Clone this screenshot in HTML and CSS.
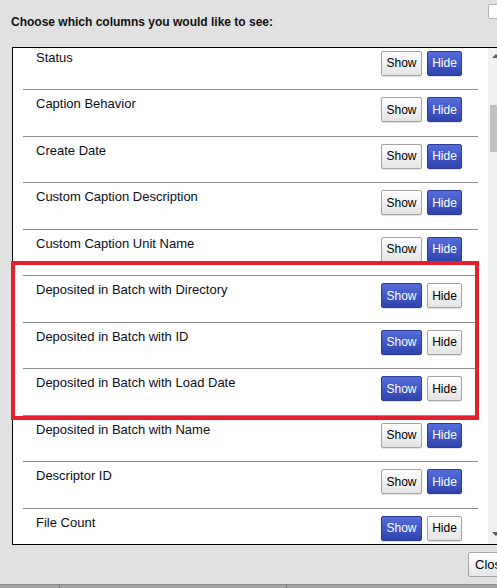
FILE: index.html
```html
<!DOCTYPE html>
<html>
<head>
<meta charset="utf-8">
<link rel="stylesheet" href="styles.css">
</head>
<body>
<div class="dialog">
  <div class="title">Choose which columns you would like to see:</div>
  <div class="corner-btn"></div>
  <div class="listbox">
    <div class="list">
      <div class="rows">
        <div class="row"><span class="label">Status</span><div class="btns"><button class="btn show">Show</button><button class="btn hide on">Hide</button></div></div>
        <div class="row"><span class="label">Caption Behavior</span><div class="btns"><button class="btn show">Show</button><button class="btn hide on">Hide</button></div></div>
        <div class="row"><span class="label">Create Date</span><div class="btns"><button class="btn show">Show</button><button class="btn hide on">Hide</button></div></div>
        <div class="row"><span class="label">Custom Caption Description</span><div class="btns"><button class="btn show">Show</button><button class="btn hide on">Hide</button></div></div>
        <div class="row"><span class="label">Custom Caption Unit Name</span><div class="btns"><button class="btn show">Show</button><button class="btn hide on">Hide</button></div></div>
        <div class="row"><span class="label">Deposited in Batch with Directory</span><div class="btns"><button class="btn show on">Show</button><button class="btn hide">Hide</button></div></div>
        <div class="row"><span class="label">Deposited in Batch with ID</span><div class="btns"><button class="btn show on">Show</button><button class="btn hide">Hide</button></div></div>
        <div class="row"><span class="label">Deposited in Batch with Load Date</span><div class="btns"><button class="btn show on">Show</button><button class="btn hide">Hide</button></div></div>
        <div class="row"><span class="label">Deposited in Batch with Name</span><div class="btns"><button class="btn show">Show</button><button class="btn hide on">Hide</button></div></div>
        <div class="row"><span class="label">Descriptor ID</span><div class="btns"><button class="btn show">Show</button><button class="btn hide on">Hide</button></div></div>
        <div class="row"><span class="label">File Count</span><div class="btns"><button class="btn show on">Show</button><button class="btn hide">Hide</button></div></div>
      </div>
    </div>
    <div class="scrollbar">
      <div class="arrow-up"></div>
      <div class="thumb"></div>
      <div class="arrow-down"></div>
    </div>
  </div>
  <div class="footer"><button class="close">Close</button></div>
</div>
<div class="bottom-bar">
  <div class="cell c1"></div>
  <div class="cell c2"></div>
  <div class="cell c3"></div>
</div>
<div class="highlight"></div>
</body>
</html>
```

FILE: styles.css
```css
html, body {
  margin: 0;
  padding: 0;
}
body {
  background: #e1e1e1;
  width: 497px;
  height: 588px;
  overflow: hidden;
  position: relative;
  font-family: "Liberation Sans", Arial, sans-serif;
  color: #000;
}
.dialog {
  display: flex;
  flex-direction: column;
}
.title {
  margin: 15px 0 0 11px;
  font-size: 12px;
  line-height: 15px;
  font-weight: bold;
  color: #111;
}
.corner-btn {
  position: absolute;
  left: 488px;
  top: 4px;
  width: 20px;
  height: 13px;
  background: #fff;
  border: 1px solid #b5b5b5;
  border-radius: 2px;
}
.listbox {
  margin: 17px 0 0 12px;
  width: 505px;
  height: 498px;
  box-sizing: border-box;
  border: 1px solid #000;
  background: #fff;
  display: flex;
  flex-shrink: 0;
}
.list {
  width: 475px;
  overflow: hidden;
  flex-shrink: 0;
}
.rows {
  margin-top: -4.5px;
}
.row {
  margin: 0 10px;
  height: 46.5px;
  box-sizing: border-box;
  border-bottom: 1px solid #8c8c8c;
  display: flex;
  align-items: flex-start;
}
.row:last-child {
  border-bottom: none;
}
.label {
  flex: 1;
  padding: 6px 0 0 13px;
  font-size: 13px;
  line-height: 15px;
  color: #0d0d1a;
}
.btns {
  display: flex;
  gap: 5px;
  margin: 7px 16px 0 0;
}
.btn {
  height: 25px;
  padding: 0;
  margin: 0;
  font-family: "Liberation Sans", Arial, sans-serif;
  font-size: 12px;
  color: #000;
  background: linear-gradient(#ffffff, #e4e4e4);
  border: 1px solid #a3a3a3;
  border-radius: 2px;
  box-shadow: 0 1px 1px rgba(0,0,0,0.12);
}
.btn.show { width: 41px; }
.btn.hide { width: 35px; }
.btn.on {
  color: #fff;
  background: linear-gradient(#536ddb, #2e44ad);
  border: 1px solid #2b3c98;
}
.scrollbar {
  width: 17px;
  background: #f0f0f0;
  position: relative;
  flex-shrink: 0;
}
.arrow-up {
  position: absolute;
  left: 4px;
  top: 6px;
  width: 0;
  height: 0;
  border-left: 4px solid transparent;
  border-right: 4px solid transparent;
  border-bottom: 4px solid #5a5a5a;
}
.arrow-down {
  position: absolute;
  left: 4px;
  bottom: 8px;
  width: 0;
  height: 0;
  border-left: 4px solid transparent;
  border-right: 4px solid transparent;
  border-top: 4px solid #5a5a5a;
}
.thumb {
  position: absolute;
  left: 2px;
  top: 57px;
  width: 13px;
  height: 47px;
  background: #c1c1c1;
}
.footer {
  display: flex;
  padding-left: 468px;
  margin-top: 7px;
}
.close {
  height: 25px;
  padding: 0 6px;
  margin: 0;
  flex-shrink: 0;
  font-family: "Liberation Sans", Arial, sans-serif;
  font-size: 13px;
  color: #000;
  background: linear-gradient(#ffffff, #e6e6e6);
  border: 1px solid #a3a3a3;
  border-radius: 2px;
}
.bottom-bar {
  position: absolute;
  left: 0;
  top: 584px;
  width: 497px;
  height: 4px;
  display: flex;
  background: #a6a6a6;
  border-top: 1px solid #8a8a8a;
  box-sizing: border-box;
}
.cell {
  height: 100%;
  box-sizing: border-box;
}
.c1 { width: 60px; border-right: 1px solid #7a7a7a; }
.c2 { width: 227px; border-right: 1px solid #7a7a7a; }
.c3 { flex: 1; }
.highlight {
  position: absolute;
  left: 11px;
  top: 261px;
  width: 468px;
  height: 159px;
  box-sizing: border-box;
  border: 4px solid #e5202a;
}
```
